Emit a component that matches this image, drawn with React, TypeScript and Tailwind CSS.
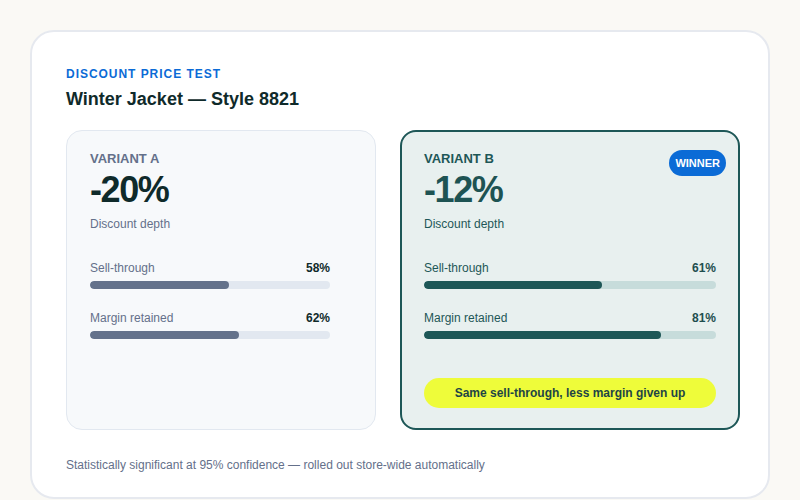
import React from 'react';

type Metric = { label: string; value: number };

interface VariantProps {
  name: string;
  discount: string;
  metrics: Metric[];
  winner?: boolean;
}

const VariantCard = ({ name, discount, metrics, winner }: VariantProps) => {
  const labelColor = winner ? 'text-[#1e5757]' : 'text-[#64708a]';
  const subColor = winner ? 'text-[#1e5757]' : 'text-[#64708a]';
  const fill = winner ? 'bg-[#1e5757]' : 'bg-[#64728b]';
  const track = winner ? 'bg-[#c7dcdb]' : 'bg-[#e2e8f0]';

  return (
    <div
      className={
        winner
          ? 'relative flex h-[300px] flex-col rounded-[16px] border-2 border-[#1e5757] bg-[#e8f0ef] px-[22px] pb-[20px] pt-[19px]'
          : 'relative flex h-[300px] flex-col rounded-[16px] border border-[#e2e8f0] bg-[#f7f9fb] pl-[23px] pr-[45px] pb-[20px] pt-[20px]'
      }
    >
      {winner && (
        <span className="absolute right-[12px] top-[18px] flex h-[26px] items-center rounded-full bg-[#0b6bd6] px-[6px] text-[11px] font-bold text-white">
          WINNER
        </span>
      )}
      <p className={`text-[13px] font-bold leading-4 ${labelColor}`}>{name}</p>
      <p
        className={`mt-[5px] text-[36px] font-bold leading-9 tracking-[-0.04em] ${
          winner ? 'text-[#1e5353]' : 'text-[#0f2a2a]'
        }`}
      >
        {discount}
      </p>
      <p className={`mt-[8px] text-[12px] leading-4 ${subColor}`}>Discount depth</p>

      <div className="mt-[28px] flex flex-col gap-[21px]">
        {metrics.map((m) => (
          <div key={m.label} className="flex flex-col gap-[5px]">
            <div className="flex items-center justify-between text-[12px] leading-4">
              <span className={subColor}>{m.label}</span>
              <span className={`font-bold ${winner ? 'text-[#1e4e4e]' : 'text-[#0f2a2a]'}`}>{m.value}%</span>
            </div>
            <div className={`h-[8px] w-full overflow-hidden rounded-full ${track}`}>
              <div className={`h-full rounded-full ${fill}`} style={{ width: `${m.value}%` }} />
            </div>
          </div>
        ))}
      </div>

      {winner && (
        <div className="mt-auto flex h-[30px] items-center justify-center rounded-full bg-[#eefc3a] text-[12px] font-bold text-[#1e4545]">
          Same sell-through, less margin given up
        </div>
      )}
    </div>
  );
};

export default function App() {
  return (
    <div
      className="h-[500px] w-[800px] overflow-hidden bg-[#faf9f5] pl-[30px] pt-[30px]"
      style={{ fontFamily: '"Liberation Sans", Arial, sans-serif' }}
    >
      <div className="h-[469px] w-[740px] rounded-[24px] border-2 border-[#e6e9ef] bg-white pl-[34px] pt-[34px]">
        <p className="text-[12px] font-bold leading-4 tracking-[0.08em] text-[#0b6bd6]">DISCOUNT PRICE TEST</p>
        <h1 className="mt-[5px] text-[18px] font-bold leading-6 text-[#0f2a2a]">Winter Jacket — Style 8821</h1>

        <div className="mt-[19px] grid grid-cols-[310px_340px] gap-[24px]">
          <VariantCard
            name="VARIANT A"
            discount="-20%"
            metrics={[
              { label: 'Sell-through', value: 58 },
              { label: 'Margin retained', value: 62 },
            ]}
          />
          <VariantCard
            name="VARIANT B"
            discount="-12%"
            winner
            metrics={[
              { label: 'Sell-through', value: 61 },
              { label: 'Margin retained', value: 81 },
            ]}
          />
        </div>

        <p className="mt-[27px] text-[12px] leading-4 text-[#64708a]">
          Statistically significant at 95% confidence — rolled out store-wide automatically
        </p>
      </div>
    </div>
  );
}
